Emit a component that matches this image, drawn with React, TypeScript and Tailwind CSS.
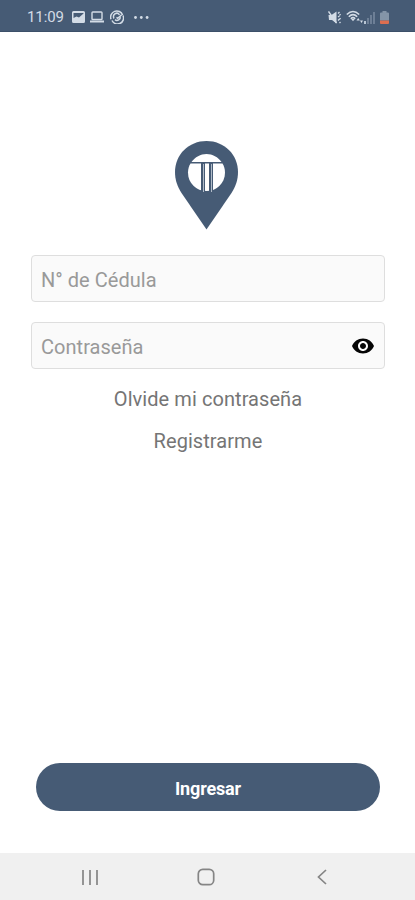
import { useState } from "react"
import type { ReactNode } from "react"

function StatusBar() {
  return (
    <header className="flex h-8 shrink-0 items-center justify-between border-b border-[#3c5069] bg-[#465b75] pt-[3px] pr-[26px] pl-[27px] text-[#d3dce6]">
      <div className="flex items-center">
        <span className="w-[37px] text-[15px] leading-none tracking-[-0.1px]">11:09</span>
        <svg width="13" height="12" viewBox="0 0 13 12" className="ml-2">
          <path fill="currentColor" fillRule="evenodd" d="M1.5 0h10A1.5 1.5 0 0 1 13 1.500v9a1.500 1.500 0 0 1-1.500 1.500h-10A1.500 1.500 0 0 1 0 10.500v-9A1.500 1.500 0 0 1 1.500 0ZM1.500 2v5l3-1.500 2.500 1 4.500-4V2Z" />
        </svg>
        <svg width="14" height="12" viewBox="0 0 14 12" className="ml-[5px]" fill="none" stroke="currentColor" strokeWidth="1.400">
          <rect x="2" y="1" width="10" height="7.500" rx="0.800" />
          <path d="M0 10.500h14" strokeWidth="2" />
        </svg>
        <svg width="14" height="14" viewBox="0 0 14 14" className="ml-[6px]" fill="none" stroke="currentColor" strokeWidth="1.500">
          <path d="M1 9.300A6 6 0 0 1 12.600 5M13 5.500A6 6 0 0 1 2 10.500" />
          <path d="M4 8.500A3.300 3.300 0 0 1 9.500 4.800M10.200 6.500A3.300 3.300 0 0 1 5 9.700" />
          <path d="m6.500 7.300 1.200 1 4-3.500" />
        </svg>
        <svg width="15" height="3" viewBox="0 0 15 3" className="ml-[10px]" fill="currentColor">
          <circle cx="1.500" cy="1.500" r="1.400" />
          <circle cx="7.300" cy="1.500" r="1.400" />
          <circle cx="13.100" cy="1.500" r="1.400" />
        </svg>
      </div>

      <div className="flex items-center">
        <svg width="14" height="13" viewBox="0 0 14 13" fill="currentColor">
          <path d="M0.500 4h3L8.500 0.500v12L4 9H1Z" />
          <path d="M0.500 0.500 8.500 12" stroke="currentColor" strokeWidth="1.400" />
          <path d="M10 2.500 11.500 1M10 6l1.500-1M10 9.500 11.500 8M12.500 3l-1 1.500M12.500 7l-1 1.500M12.500 11l-1 1" stroke="currentColor" strokeWidth="1.300" fill="none" />
        </svg>
        <svg width="18" height="14" viewBox="0 0 18 14" className="ml-[4px]" fill="none" stroke="currentColor" strokeWidth="1.600">
          <path d="M0.800 4.500Q7-1.500 13.200 4.500M2.800 6.700Q7 2.500 11.200 6.700M4.800 8.800Q7 6.500 9.200 8.800" />
          <path d="m5.200 9 1.800 2.300L8.800 9Z" fill="currentColor" stroke="none" />
          <path d="m10.500 10.500 1.700-2.500 1.700 2.500ZM14 10.500h3L15.500 13Z" fill="currentColor" stroke="none" />
        </svg>
        <svg width="12" height="13" viewBox="0 0 12 13" fill="#8293a7">
          <path d="M0 10h2v3H0Z" fill="#b8c5d3" />
          <path d="M3 7h2v6H3ZM6 4h2v9H6ZM9 1h2v12H9Z" opacity="0.650" />
        </svg>
        <svg width="9" height="13" viewBox="0 0 9 13" className="ml-[4px]">
          <path d="M2.500 0h4v1.500H8A1 1 0 0 1 9 2.500V9.500H0v-7a1 1 0 0 1 1-1h1.500Z" fill="#8495a8" />
          <path d="M0 9.500h9V12a1 1 0 0 1-1 1H1a1 1 0 0 1-1-1Z" fill="#dc6e50" />
        </svg>
      </div>
    </header>
  )
}

function Logo() {
  return (
    <svg width="64" height="89" viewBox="0.5 0.5 64 89" className="shrink-0">
      <path
        d="M32 .5C14.300.5.5 14 .5 31.500c0 8 2.300 14.500 6.500 21L32 89l25-36.500c4.200-6.500 6.500-13 6.500-21C63.500 14 49.700.5 32 .5Z"
        fill="#465b75"
      />
      {/* round capital over the two columns */}
      <path d="M17 21.500C20.500 16.500 26 13.500 32 13.500s11.500 3 15 8Z" fill="#fff" />
      <path d="M16 23h32c1.600 2.500 2.500 5.600 2.500 9C50.500 42.800 42.200 50.500 32 50.500s-18.500-7.700-18.500-18.500c0-3.400.9-6.500 2.500-9Z" fill="#fff" />
      <path d="M26.500 22.500h4v29h-4ZM34.500 22.500h4v29h-4Z" fill="#465b75" />
      <path d="M28.500 23.500h1v28h-1ZM36.500 23.500h1v28h-1Z" fill="#b0bbc8" />
    </svg>
  )
}

function Field({ label, type = "text", children }: { label: string; type?: string; children?: ReactNode }) {
  return (
    <div className="flex h-[47px] items-center rounded-[4px] border border-[#dedede] bg-[#fafafa] pr-[9px] pl-[9px]">
      <input
        type={type}
        placeholder={label}
        aria-label={label}
        className="min-w-0 flex-1 bg-transparent pt-0.5 text-[20px] tracking-[0.03px] text-[#444] outline-none placeholder:text-[#999]"
      />
      {children}
    </div>
  )
}

function NavBar() {
  return (
    <nav className="flex h-[47px] shrink-0 items-center justify-between bg-[#f0f0f0] pt-px pr-[84px] pl-[81px] text-[#858585]">
      <button aria-label="Recientes">
        <svg width="18" height="17" viewBox="0 0 18 17" fill="none" stroke="currentColor" strokeWidth="1.700">
          <path d="M2 1v15M9 1v15M16 1v15" />
        </svg>
      </button>
      <button aria-label="Inicio">
        <svg width="18" height="18" viewBox="0 0 18 18" fill="none" stroke="currentColor" strokeWidth="1.700">
          <rect x="1.300" y="1.300" width="15.400" height="15.400" rx="4.500" />
        </svg>
      </button>
      <button aria-label="Volver">
        <svg width="18" height="18" viewBox="0 0 18 18" fill="none" stroke="currentColor" strokeWidth="1.700">
          <path d="M13 2 5.500 9l7.500 7" />
        </svg>
      </button>
    </nav>
  )
}

export default function App() {
  const [visible, setVisible] = useState(false)

  return (
    <div className="flex h-[900px] w-[415px] flex-col bg-white font-[Roboto,sans-serif]">
      <StatusBar />

      <main className="flex flex-1 flex-col pt-[109px]">
        <div className="flex justify-center pr-[2px]">
          <Logo />
        </div>

        <form className="flex flex-1 flex-col" onSubmit={(e) => e.preventDefault()}>
          <div className="mt-[25px] flex flex-col gap-5 pr-[30px] pl-[31px]">
            <Field label="N° de Cédula" />
            <Field label="Contraseña" type={visible ? "text" : "password"}>
              <button type="button" aria-label="Mostrar contraseña" onClick={() => setVisible(!visible)}>
                <svg width="24" height="24" viewBox="0 0 24 24" fill="#050505">
                  <path d="M12 4.500C7 4.500 2.730 7.610 1 12c1.730 4.390 6 7.500 11 7.500s9.270-3.110 11-7.500c-1.730-4.390-6-7.500-11-7.500zM12 17c-2.760 0-5-2.240-5-5s2.240-5 5-5 5 2.240 5 5-2.240 5-5 5zm0-8c-1.660 0-3 1.340-3 3s1.340 3 3 3 3-1.340 3-3-1.340-3-3-3z" />
                </svg>
              </button>
            </Field>
          </div>

          <div className="mt-[15px] flex flex-col items-center gap-3 pl-px text-[20px] leading-[30px] tracking-[0.07px] text-[#757575]">
            <a href="#">Olvide mi contraseña</a>
            <a href="#">Registrarme</a>
          </div>

          <button
            type="submit"
            className="mt-auto mr-[35px] mb-[42px] ml-9 h-12 rounded-full bg-[#465b75] pt-0.5 text-[18px] font-bold tracking-[-0.15px] text-white"
          >
            Ingresar
          </button>
        </form>
      </main>

      <NavBar />
    </div>
  )
}
